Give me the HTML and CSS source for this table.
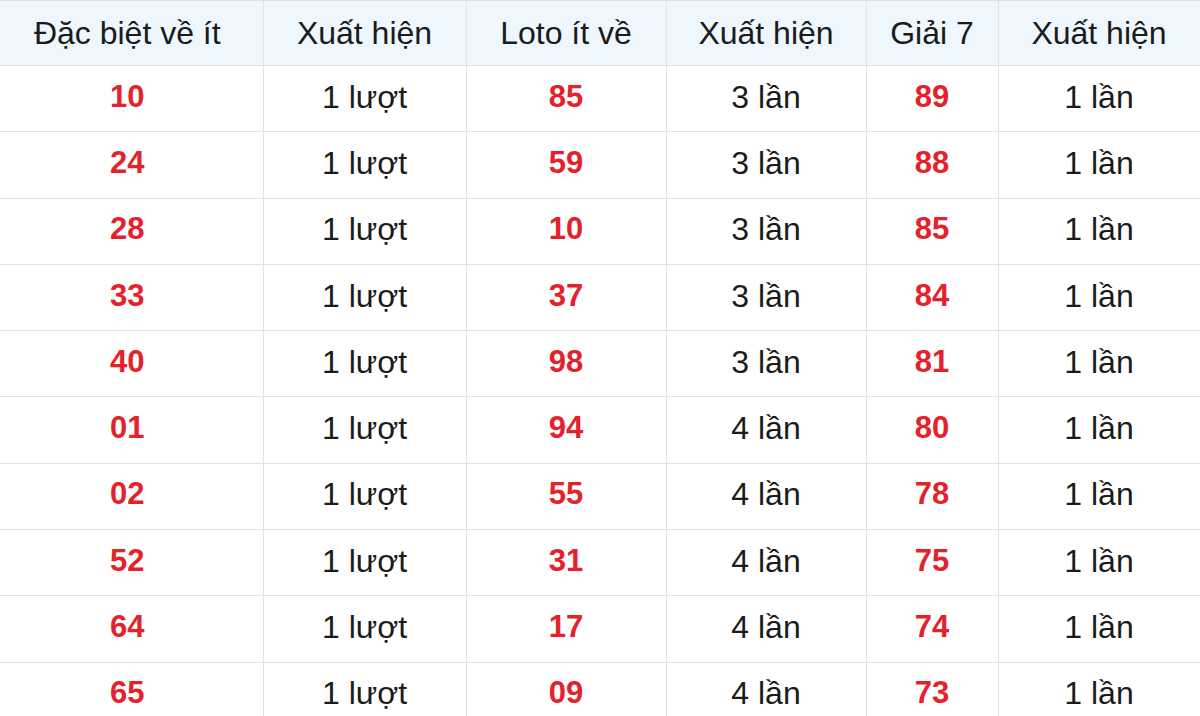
FILE: index.html
```html
<!DOCTYPE html>
<html lang="vi">
<head>
<meta charset="utf-8">
<link rel="stylesheet" href="styles.css">
</head>
<body>
<table class="stats">
  <colgroup>
    <col class="c1"><col class="c2"><col class="c3"><col class="c4"><col class="c5"><col class="c6">
  </colgroup>
  <thead>
    <tr><th>Đặc biệt về ít</th><th>Xuất hiện</th><th>Loto ít về</th><th>Xuất hiện</th><th>Giải 7</th><th>Xuất hiện</th></tr>
  </thead>
  <tbody>
    <tr><td class="num">10</td><td>1 lượt</td><td class="num">85</td><td>3 lần</td><td class="num">89</td><td>1 lần</td></tr>
    <tr><td class="num">24</td><td>1 lượt</td><td class="num">59</td><td>3 lần</td><td class="num">88</td><td>1 lần</td></tr>
    <tr><td class="num">28</td><td>1 lượt</td><td class="num">10</td><td>3 lần</td><td class="num">85</td><td>1 lần</td></tr>
    <tr><td class="num">33</td><td>1 lượt</td><td class="num">37</td><td>3 lần</td><td class="num">84</td><td>1 lần</td></tr>
    <tr><td class="num">40</td><td>1 lượt</td><td class="num">98</td><td>3 lần</td><td class="num">81</td><td>1 lần</td></tr>
    <tr><td class="num">01</td><td>1 lượt</td><td class="num">94</td><td>4 lần</td><td class="num">80</td><td>1 lần</td></tr>
    <tr><td class="num">02</td><td>1 lượt</td><td class="num">55</td><td>4 lần</td><td class="num">78</td><td>1 lần</td></tr>
    <tr><td class="num">52</td><td>1 lượt</td><td class="num">31</td><td>4 lần</td><td class="num">75</td><td>1 lần</td></tr>
    <tr><td class="num">64</td><td>1 lượt</td><td class="num">17</td><td>4 lần</td><td class="num">74</td><td>1 lần</td></tr>
    <tr><td class="num">65</td><td>1 lượt</td><td class="num">09</td><td>4 lần</td><td class="num">73</td><td>1 lần</td></tr>
  </tbody>
</table>
</body>
</html>
```
FILE: styles.css
```css
html, body {
  margin: 0;
  padding: 0;
  background: #ffffff;
}
body {
  font-family: "Liberation Sans", Arial, sans-serif;
  color: #1b1b1b;
  overflow: hidden;
}
.stats {
  width: 1200px;
  border-collapse: collapse;
  table-layout: fixed;
}
.c1 { width: 263px; }
.c2 { width: 203px; }
.c3 { width: 200px; }
.c4 { width: 200px; }
.c5 { width: 132px; }
.c6 { width: 202px; }
.stats th,
.stats td {
  border: 1px solid #e2e2e2;
  padding: 0;
  text-align: center;
  vertical-align: middle;
  font-size: 32px;
  line-height: 36px;
}
.stats tr > :first-child {
  border-left: none;
  padding-right: 8px;
}
.stats th {
  background: #eef6fe;
  font-weight: normal;
  height: 64px;
}
.stats td {
  height: 61.3px;
  padding-bottom: 4px;
}
.stats td.num {
  color: #e3222b;
  font-weight: bold;
  font-size: 31px;
}
```
